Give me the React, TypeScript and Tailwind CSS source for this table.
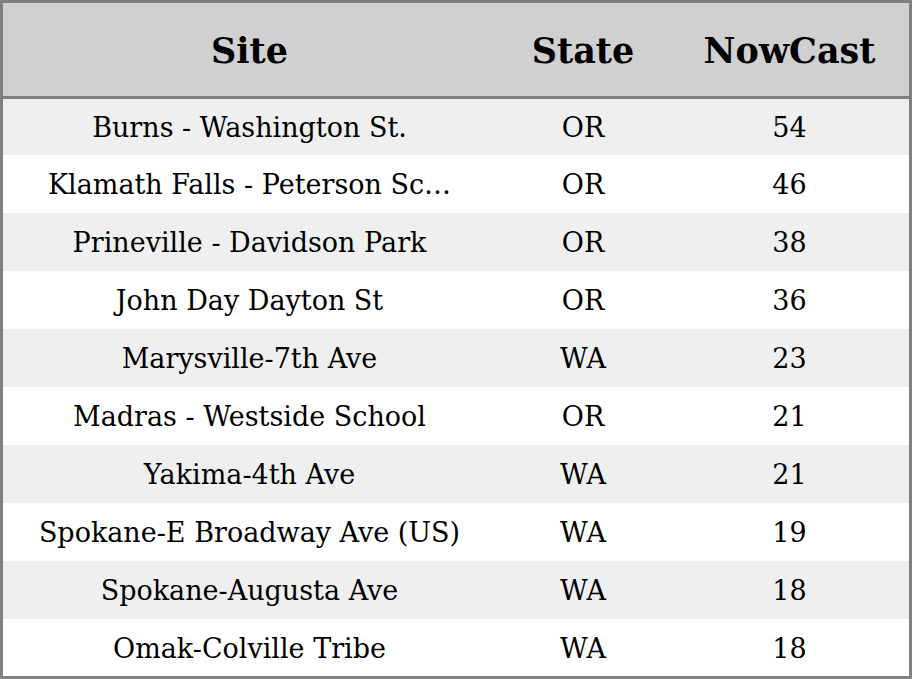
const rows = [
  { site: "Burns - Washington St.", state: "OR", nowcast: 54 },
  { site: "Klamath Falls - Peterson Sc…", state: "OR", nowcast: 46 },
  { site: "Prineville - Davidson Park", state: "OR", nowcast: 38 },
  { site: "John Day Dayton St", state: "OR", nowcast: 36 },
  { site: "Marysville-7th Ave", state: "WA", nowcast: 23 },
  { site: "Madras - Westside School", state: "OR", nowcast: 21 },
  { site: "Yakima-4th Ave", state: "WA", nowcast: 21 },
  { site: "Spokane-E Broadway Ave (US)", state: "WA", nowcast: 19 },
  { site: "Spokane-Augusta Ave", state: "WA", nowcast: 18 },
  { site: "Omak-Colville Tribe", state: "WA", nowcast: 18 },
];

export default function App() {
  return (
    <div
      className="h-[679px] w-[912px] flex flex-col border-[3px] border-[#808080] bg-white text-black"
      style={{ fontFamily: '"DejaVu Serif", serif' }}
    >
      {/* header */}
      <div className="grid grid-cols-[493px_174px_239px] h-[96px] shrink-0 items-center pt-[3px] bg-[#d0d0d0] border-b-[3px] border-[#808080] text-[35px] font-bold">
        <div className="text-center">Site</div>
        <div className="text-center">State</div>
        <div className="text-center">NowCast</div>
      </div>

      {/* rows */}
      <div className="flex-1 flex flex-col overflow-hidden">
        {rows.map((row, i) => (
          <div
            key={i}
            className={
              "h-[58px] first:h-[56px] shrink-0 grid grid-cols-[493px_174px_239px] items-center pt-[2px] text-[27px] " +
              (i % 2 === 0 ? "bg-[#efefef]" : "bg-white")
            }
          >
            <div className="text-center whitespace-nowrap">{row.site}</div>
            <div className="text-center">{row.state}</div>
            <div className="text-center">{row.nowcast}</div>
          </div>
        ))}
      </div>
    </div>
  );
}
